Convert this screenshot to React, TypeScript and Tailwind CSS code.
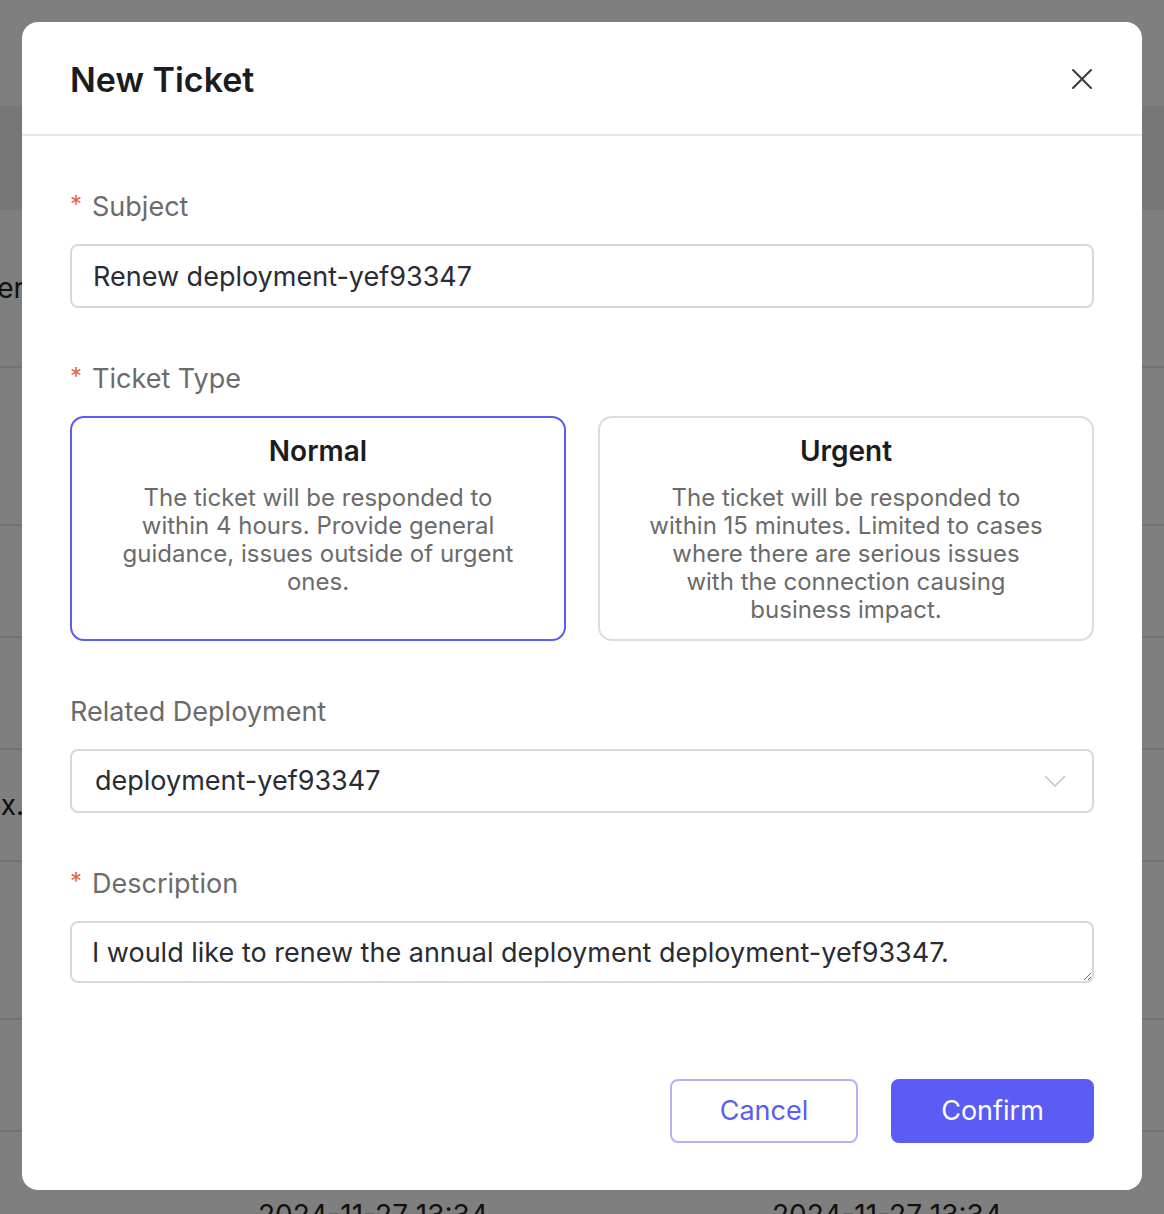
import { ReactNode } from "react";

const font = { fontFamily: "Inter, 'Noto Sans', sans-serif" };

const Label = ({ children, required = false }: { children: ReactNode; required?: boolean }) => (
  <div className="flex h-[40px] items-center pt-[2px] text-[27px] text-[#6b6b6b]">
    {required && <span className="mr-[10px] -mt-[4px] text-[24px] text-[#e8673c]">*</span>}
    <span>{children}</span>
  </div>
);

const TypeCard = ({
  title,
  lines,
  active = false,
}: {
  title: string;
  lines: string[];
  active?: boolean;
}) => (
  <div
    className={`flex h-[225px] flex-1 flex-col items-center rounded-[14px] border-2 pt-[15px] ${
      active ? "border-[#5b5bf5]" : "border-[#dcdce0]"
    }`}
  >
    <div className="h-[36px] text-[28px] font-semibold leading-[36px] text-[#1c1c1e]">{title}</div>
    <div className="mt-[15px] text-center text-[24px] leading-[28px] text-[#6b6b6b]">
      {lines.map((l) => (
        <div key={l} className="whitespace-nowrap">
          {l}
        </div>
      ))}
    </div>
  </div>
);

const BgRow = ({ h, left, dates = false }: { h: string; left?: string; dates?: boolean }) => (
  <div className={`flex items-center border-b-2 border-[#e6e7ea] ${h}`}>
    <div className="flex w-[24px] justify-end">
      {left && <span className="whitespace-nowrap text-[28px] text-[#222]">{left}</span>}
    </div>
    {dates && (
      <div className="flex self-start pt-[62px] text-[28px] text-[#222]">
        <span className="ml-[234px] whitespace-nowrap">2024-11-27 13:34</span>
        <span className="ml-[284px] whitespace-nowrap">2024-11-27 13:34</span>
      </div>
    )}
  </div>
);

export default function App() {
  return (
    <div className="relative h-[1214px] w-full overflow-hidden bg-white" style={font}>
      {/* page behind the dialog */}
      <div className="flex flex-col">
        <div className="h-[106px]" />
        <div className="h-[104px] bg-[#eeeff1]" />
        <BgRow h="h-[158px]" left="Server" />
        <BgRow h="h-[158px]" />
        <BgRow h="h-[112px]" />
        <BgRow h="h-[112px]" />
        <BgRow h="h-[112px]" left="box." />
        <BgRow h="h-[158px]" />
        <BgRow h="h-[112px]" />
        <BgRow h="h-[140px]" dates />
      </div>

      <div className="absolute inset-0 bg-black/50" />

      <div className="absolute left-[22px] top-[22px] flex h-[1168px] w-[1120px] flex-col rounded-[16px] bg-white">
        <div className="flex h-[114px] items-center justify-between border-b-2 border-[#e5e7eb] px-[48px] pt-[2px]">
          <h2 className="text-[34px] font-semibold text-[#1c1c1e]">New Ticket</h2>
          <button className="flex h-[24px] w-[24px] items-center justify-center text-[#3b3b45]">
            <svg width="22" height="22" viewBox="0 0 22 22" fill="none" stroke="currentColor" strokeWidth="2" strokeLinecap="round">
              <path d="M2 2 L20 20 M20 2 L2 20" />
            </svg>
          </button>
        </div>

        <div className="flex flex-1 flex-col px-[48px] pt-[50px]">
          <div className="flex flex-col gap-[50px]">
            <div className="flex flex-col gap-[18px]">
              <Label required>Subject</Label>
              <input
                className="h-[64px] w-full rounded-[8px] border-2 border-[#d6d8dd] px-[21px] text-[27px] text-[#2a2c35] outline-none"
                defaultValue="Renew deployment-yef93347"
              />
            </div>

            <div className="flex flex-col gap-[18px]">
              <Label required>Ticket Type</Label>
              <div className="flex gap-[32px]">
                <TypeCard
                  active
                  title="Normal"
                  lines={[
                    "The ticket will be responded to",
                    "within 4 hours. Provide general",
                    "guidance, issues outside of urgent",
                    "ones.",
                  ]}
                />
                <TypeCard
                  title="Urgent"
                  lines={[
                    "The ticket will be responded to",
                    "within 15 minutes. Limited to cases",
                    "where there are serious issues",
                    "with the connection causing",
                    "business impact.",
                  ]}
                />
              </div>
            </div>

            <div className="flex flex-col gap-[18px]">
              <Label>Related Deployment</Label>
              <div className="flex h-[64px] w-full items-center justify-between rounded-[8px] border-2 border-[#d6d8dd] pl-[23px] pr-[26px]">
                <span className="text-[27px] text-[#2a2c35]">deployment-yef93347</span>
                <svg width="22" height="12" viewBox="0 0 22 12" fill="none" stroke="#c3c6cd" strokeWidth="1.6">
                  <path d="M1 1 L11 11 L21 1" />
                </svg>
              </div>
            </div>

            <div className="flex flex-col gap-[18px]">
              <Label required>Description</Label>
              <textarea
                className="h-[62px] w-full rounded-[8px] border-2 border-[#d6d8dd] px-[20px] pb-[10px] pt-[12px] text-[27px] leading-[36px] text-[#2a2c35] outline-none"
                defaultValue="I would like to renew the annual deployment deployment-yef93347."
              />
            </div>
          </div>

          <div className="mt-[96px] flex justify-end gap-[33px]">
            <button className="h-[64px] w-[188px] rounded-[8px] border-2 border-[#b3b1fc] text-[27px] text-[#5b5bf5]">
              Cancel
            </button>
            <button className="h-[64px] w-[203px] rounded-[8px] bg-[#5b5bf5] text-[27px] text-white">
              Confirm
            </button>
          </div>
        </div>
      </div>
    </div>
  );
}
